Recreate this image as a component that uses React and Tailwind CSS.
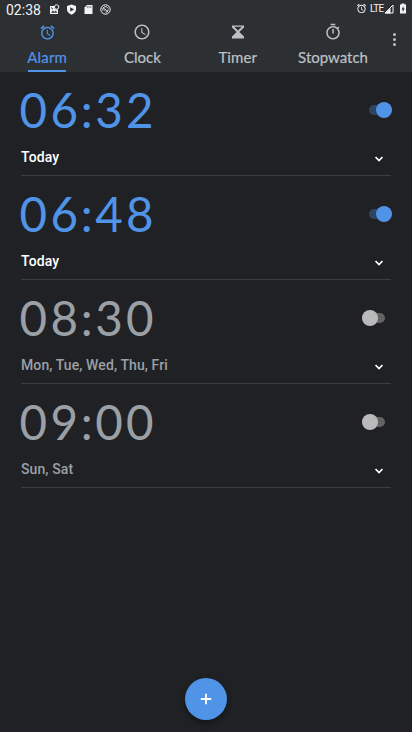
import React from "react";

const AlarmIcon = ({ className }) => (
  <svg viewBox="0 0 24 24" className={className} fill="currentColor">
    <path d="M22 5.72l-4.6-3.86-1.29 1.53 4.6 3.86L22 5.72zM7.88 3.39L6.6 1.86 2 5.71l1.29 1.53 4.59-3.85zM12.5 8H11v6l4.75 2.85.75-1.23-4-2.37V8zM12 4c-4.97 0-9 4.03-9 9s4.02 9 9 9a9 9 0 0 0 0-18zm0 16c-3.87 0-7-3.13-7-7s3.13-7 7-7 7 3.13 7 7-3.13 7-7 7z" />
  </svg>
);

const ClockIcon = ({ className }) => (
  <svg viewBox="0 0 24 24" className={className} fill="currentColor">
    <path d="M11.99 2C6.47 2 2 6.48 2 12s4.47 10 9.99 10C17.52 22 22 17.52 22 12S17.52 2 11.99 2zM12 20c-4.42 0-8-3.58-8-8s3.58-8 8-8 8 3.58 8 8-3.58 8-8 8zm.5-13H11v6l5.25 3.15.75-1.23-4.5-2.67z" />
  </svg>
);

const TimerIcon = ({ className }) => (
  <svg viewBox="0 0 18 18" className={className} fill="currentColor">
    <path fillRule="evenodd" d="M3 2.5h12v2L10.300 9l4.700 4.400v2.100H3v-2.100L7.700 9 3 4.500zM5.200 3.800 9 7.600l3.800-3.800z" />
  </svg>
);

const StopwatchIcon = ({ className }) => (
  <svg viewBox="0 0 24 24" className={className} fill="currentColor">
    <path d="M15 1H9v2h6V1zm-4 13h2V8h-2v6zm8.030-6.610l1.420-1.420c-.43-.51-.9-.99-1.410-1.410l-1.420 1.420A8.962 8.962 0 0 0 12 4c-4.970 0-9 4.030-9 9s4.020 9 9 9a8.994 8.994 0 0 0 7.030-14.610zM12 20c-3.870 0-7-3.130-7-7s3.130-7 7-7 7 3.130 7 7-3.130 7-7 7z" />
  </svg>
);

const tabs = [
  { label: "Alarm", Icon: AlarmIcon, size: "h-[17px] w-[17px]", spacing: "tracking-[0.2px]", active: true },
  { label: "Clock", Icon: ClockIcon, size: "h-[18px] w-[18px]", spacing: "tracking-[0px]" },
  { label: "Timer", Icon: TimerIcon, size: "h-[18px] w-[18px]", spacing: "tracking-[0.1px]" },
  { label: "Stopwatch", Icon: StopwatchIcon, size: "h-[18px] w-[18px]", spacing: "tracking-[0px]" },
];

const alarms = [
  { time: "06:32", days: "Today", on: true },
  { time: "06:48", days: "Today", on: true },
  { time: "08:30", days: "Mon, Tue, Wed, Thu, Fri", on: false },
  { time: "09:00", days: "Sun, Sat", on: false },
];

function StatusBar() {
  return (
    <div className="flex h-5 items-center pl-[6px] pr-[5px] text-[#f1f3f4]">
      <span className="w-[35px] whitespace-nowrap font-[Roboto,sans-serif] text-[14px] leading-5">02:38</span>
      <div className="-mt-px ml-[8px] flex items-center gap-[6px]">
        <svg viewBox="0 0 11 11" className="h-[11px] w-[11px]">
          <path d="M1 2h4.500v3L9 5.500V10H1z" fill="currentColor" />
          <path d="m2 8.800 2-2.300 1.400 1.400L6.800 6.500 8.300 8.800z" fill="#2d3033" />
          <circle cx="7.600" cy="3" r="2.200" fill="#2d3033" stroke="currentColor" />
          <path d="m2 3.500 2 1.800" stroke="#2d3033" />
        </svg>
        <svg viewBox="0 0 11 11" className="h-[11px] w-[11px]">
          <path d="M5.500.5 10 2v3.500c0 2.400-2 4.200-4.500 5.200C3 9.700 1 7.900 1 5.500V2z" fill="currentColor" />
          <path d="m4.200 3.200 4 2.200-4 2.200z" fill="#2d3033" />
        </svg>
        <svg viewBox="0 0 11 11" className="h-[11px] w-[11px]">
          <path d="M4 1h5.500v9h-8V3.500z" fill="currentColor" />
          <path d="M4.300 2.200v1.600M6 2.200v1.600M7.700 2.200v1.600" stroke="#2d3033" strokeWidth=".7" />
        </svg>
        <svg viewBox="0 0 11 11" className="h-[11px] w-[11px]" fill="none" stroke="currentColor">
          <circle cx="5.500" cy="5.500" r="4.700" />
          <path d="M3 6.500c-.8-2 .6-3.800 2.500-3.800 1.500 0 2.500.8 2.700 1.800M8 5.500c0 2-1.300 2.800-2.500 2.800M3.500 4l4.500 4M4.500 6.500l1-1" />
        </svg>
      </div>
      <div className="-mt-[3px] ml-auto flex items-center">
        <AlarmIcon className="h-[11px] w-[11px]" />
        <span className="ml-[3px] w-[14px] whitespace-nowrap font-[Roboto,sans-serif] text-[10px] leading-5 tracking-[-0.7px]">LTE</span>
        <svg viewBox="0 0 10 10" className="h-[10px] w-[10px]">
          <path d="M9 1v8H1z" fill="none" stroke="currentColor" />
          <path d="M6.500 4v5.500H1z" fill="currentColor" />
        </svg>
        <svg viewBox="0 0 8 11" className="ml-[5px] h-[11px] w-[8px]">
          <path d="M2.500.5h3v1H7v9H1v-9h1.500z" fill="currentColor" />
          <path d="M4.500 3 2.500 6.500h1.300V9l2-3.500H4.500z" fill="#2d3033" />
        </svg>
      </div>
    </div>
  );
}

function AlarmRow({ time, days, on }) {
  return (
    <section className="mx-[21px] h-[104px] border-b border-[#3b3d40]">
      <div className="-mr-px flex h-[76px] items-center justify-between">
        <div className={`-ml-[3px] flex font-[Lato,sans-serif] text-[47.500px] leading-[76px] ${on ? "text-[#5094e8]" : "text-[#9aa0a6]"}`}>
          {time.split("").map((c, i) => (
            <span key={i} className={c === ":" ? "w-[14px] text-center" : "w-[30.800px] text-center"}>{c}</span>
          ))}
        </div>
        <div className={`flex h-4 w-[30px] items-center ${on ? "justify-end pr-[0.500px]" : "justify-start"}`}>
          <div className={`flex h-[10px] w-[23px] items-center rounded-full ${on ? "justify-end bg-[#2e4564]" : "justify-start bg-[#616263]"}`}>
            <div className={`h-[15.500px] w-[15.500px] shrink-0 rounded-full ${on ? "bg-[#5094e8]" : "bg-[#bababa]"}`} />
          </div>
        </div>
      </div>
      <div className="-mt-px flex h-[20px] items-center justify-between pr-[7px]">
        <span className={`font-[Roboto,sans-serif] text-[14px] font-medium leading-5 tracking-[0.1px] ${on ? "text-white" : "text-[#9aa0a6]"}`}>{days}</span>
        <svg viewBox="0 0 10 8" className="mt-[3px] h-[8px] w-[10px]" fill="none" stroke="white" strokeWidth="1.700">
          <path d="m1.500 2 3.500 3.500L8.500 2" />
        </svg>
      </div>
    </section>
  );
}

export default function App() {
  return (
    <main className="flex h-[732px] w-[412px] flex-col overflow-hidden bg-[#202124]">
      <header className="h-[72px] bg-[#2d3033]">
        <StatusBar />
        <div className="flex h-[52px]">
          <nav className="-ml-[0.500px] flex">
            {tabs.map(({ label, Icon, size, spacing, active }) => (
              <div key={label} className={`flex w-[95.300px] flex-col items-center ${active ? "text-[#5094e8]" : "text-[#bdc1c6]"}`}>
                <div className="mt-[3px] flex h-[18px] items-center"><Icon className={size} /></div>
                <span className={`mt-[6px] font-[Lato,sans-serif] text-[15px] font-normal leading-5 [-webkit-text-stroke:0.2px_currentColor] ${spacing}`}>{label}</span>
                {active && <div className="mt-auto h-[2px] w-[38px] bg-[#5094e8]" />}
              </div>
            ))}
          </nav>
          <div className="flex flex-1 flex-col items-center gap-[2px] pr-[4px] pt-[12.500px]">
            <i className="h-[3px] w-[3px] rounded-full bg-[#bdc1c6]" />
            <i className="h-[3px] w-[3px] rounded-full bg-[#bdc1c6]" />
            <i className="h-[3px] w-[3px] rounded-full bg-[#bdc1c6]" />
          </div>
        </div>
      </header>
      <div className="flex-1">
        {alarms.map((a) => <AlarmRow key={a.time} {...a} />)}
      </div>
      <button className="mb-[12px] flex h-[42px] w-[42px] items-center justify-center self-center rounded-full bg-[#5094e8] shadow-[0_3px_6px_rgba(0,0,0,0.4)]">
        <svg viewBox="0 0 12 12" className="h-3 w-3" stroke="white" strokeWidth="1.800">
          <path d="M6 .8v10.400M.8 6h10.400" />
        </svg>
      </button>
    </main>
  );
}
